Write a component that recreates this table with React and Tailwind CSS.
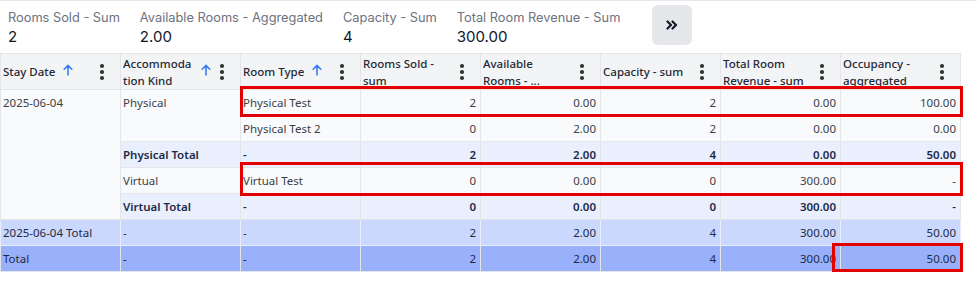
import React from "react";

const summary = [
  { label: "Rooms Sold - Sum", value: "2" },
  { label: "Available Rooms - Aggregated", value: "2.00" },
  { label: "Capacity - Sum", value: "4" },
  { label: "Total Room Revenue - Sum", value: "300.00" },
];

const columns = [
  { title: "Stay Date", sort: true },
  { title: "Accommodation Kind", sort: true, breakAll: true },
  { title: "Room Type", sort: true },
  { title: "Rooms Sold - sum" },
  { title: "Available Rooms - ..." },
  { title: "Capacity - sum" },
  { title: "Total Room Revenue - sum" },
  { title: "Occupancy - aggregated" },
];

const SortArrow = () => (
  <svg width="10" height="12" viewBox="0 0 10 12" className="inline-block ml-2 -mt-1 shrink-0">
    <path d="M5 11V1.5M1.2 5.2L5 1.4l3.8 3.8" stroke="#3b7cf5" strokeWidth="1.6" fill="none" strokeLinecap="round" strokeLinejoin="round" />
  </svg>
);

const Kebab = () => (
  <svg width="6" height="18" viewBox="0 0 6 18" className="shrink-0">
    <circle cx="3" cy="3" r="2.1" fill="#333" />
    <circle cx="3" cy="9" r="2.1" fill="#333" />
    <circle cx="3" cy="15" r="2.1" fill="#333" />
  </svg>
);

const HeaderCell = ({ col }) => (
  <th className="w-[120px] h-[35px] p-0 border border-[#e3e5e8] bg-[#f3f4f6] font-medium text-left align-middle">
    <div className="flex items-center h-[35px] pl-[2px] pr-[15px] overflow-hidden">
      <div className="flex-1 flex items-center min-w-0 mr-2 max-h-[34px] overflow-hidden">
        <span className={`min-w-0 leading-[17px] text-[#1f2937] ${col.breakAll ? "break-all" : ""}`}>
          {col.title}
        </span>
        {col.sort && <SortArrow />}
      </div>
      <Kebab />
    </div>
  </th>
);

const cellBase = "h-[26px] pl-[2px] pr-1 py-0 border border-[#e3e5e8] whitespace-nowrap";

// offset = index of the first cell in the full 8-column row
const Row = ({ cells, kind, offset = 0 }) => {
  const bg =
    kind === "sub"
      ? "bg-[#e9effd] font-semibold text-[#1e2a45]"
      : kind === "date"
      ? "bg-[#cad8fd] text-[#1e2a45] border-[#e8eefc]"
      : kind === "grand"
      ? "bg-[#99b1fb] text-[#1e2a45] border-[#dfe6fd]"
      : "bg-[#f9fafb] text-[#3a3f47]";
  return cells.map((c, i) => (
    <td key={i} className={`${cellBase} ${bg} ${i + offset >= 3 ? "text-right" : "text-left"}`}>
      {c}
    </td>
  ));
};

export default function App() {
  return (
    <div className="w-[977px] h-[288px] bg-white overflow-hidden border-t border-[#e5e7eb] relative">
      <div className="flex items-start pl-2 pt-[3px] h-[52px]" style={{ fontFamily: "Inter, 'Noto Sans', sans-serif" }}>
        {summary.map((s) => (
          <div key={s.label} className="mr-5 pt-[5px]">
            <div className="text-[12.8px] leading-[18px] text-[#6b7280]">{s.label}</div>
            <div className="text-[15px] leading-[19px] text-[#0f172a]">{s.value}</div>
          </div>
        ))}
        <button className="ml-3 mt-[1px] w-10 h-10 rounded-md bg-[#e5e7eb] flex items-center justify-center">
          <svg width="12" height="10" viewBox="0 0 12 10">
            <path d="M1.5 1.5L5 5L1.5 8.5M6.5 1.5L10 5L6.5 8.5" stroke="#111827" strokeWidth="2.2" fill="none" strokeLinecap="round" strokeLinejoin="round" />
          </svg>
        </button>
      </div>

      <table
        className="border-collapse table-fixed w-[960px] text-[11.5px]"
        style={{ fontFamily: "'Noto Sans', 'Open Sans', sans-serif" }}
      >
        <thead>
          <tr>
            {columns.map((c) => (
              <HeaderCell key={c.title} col={c} />
            ))}
          </tr>
        </thead>
        <tbody>
          <tr>
            <td rowSpan={5} className={`${cellBase} bg-[#f9fafb] text-[#3a3f47] align-top pt-1`}>2025-06-04</td>
            <td rowSpan={2} className={`${cellBase} bg-[#f9fafb] text-[#3a3f47] align-top pt-1`}>Physical</td>
            <Row offset={2} cells={["Physical Test", "2", "0.00", "2", "0.00", "100.00"]} />
          </tr>
          <tr>
            <Row offset={2} cells={["Physical Test 2", "0", "2.00", "2", "0.00", "0.00"]} />
          </tr>
          <tr>
            <Row offset={1} kind="sub" cells={["Physical Total", "-", "2", "2.00", "4", "0.00", "50.00"]} />
          </tr>
          <tr>
            <td className={`${cellBase} bg-[#f9fafb] text-[#3a3f47]`}>Virtual</td>
            <Row offset={2} cells={["Virtual Test", "0", "0.00", "0", "300.00", "-"]} />
          </tr>
          <tr>
            <Row offset={1} kind="sub" cells={["Virtual Total", "-", "0", "0.00", "0", "300.00", "-"]} />
          </tr>
          <tr>
            <Row kind="date" cells={["2025-06-04 Total", "-", "-", "2", "2.00", "4", "300.00", "50.00"]} />
          </tr>
          <tr>
            <Row kind="grand" cells={["Total", "-", "-", "2", "2.00", "4", "300.00", "50.00"]} />
          </tr>
        </tbody>
      </table>

      <div className="absolute left-[240px] top-[85px] w-[723px] h-[31px] border-[3px] border-[#e50000]" />
      <div className="absolute left-[240px] top-[161px] w-[723px] h-[34px] border-[3px] border-[#e50000]" />
      <div className="absolute left-[832px] top-[242px] w-[131px] h-[29px] border-[3px] border-[#e50000]" />
    </div>
  );
}
